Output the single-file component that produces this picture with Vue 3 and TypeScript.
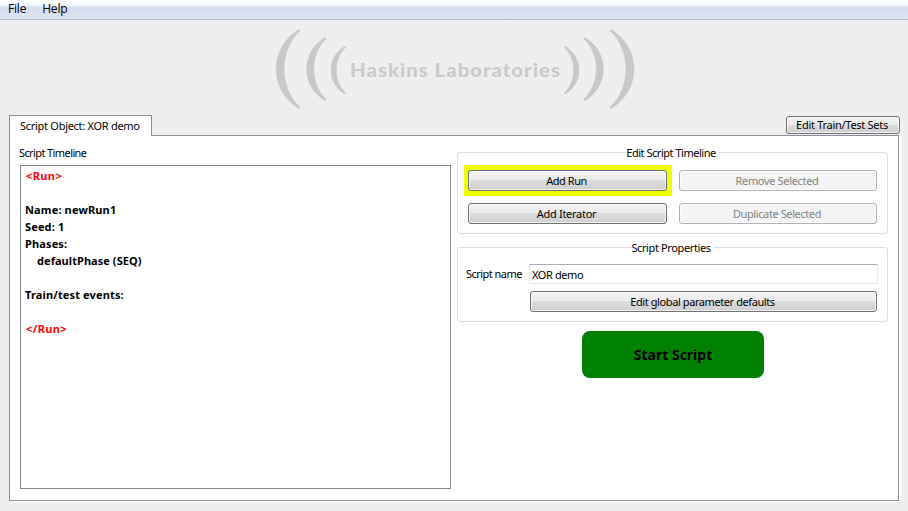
<script setup lang="ts">
import { ref } from 'vue'

interface ScriptLine {
  text: string
  tag?: boolean
  indent?: boolean
}

const menus = ['File', 'Help']
const scriptName = ref('XOR demo')
const lines: ScriptLine[] = [
  { text: '<Run>', tag: true },
  { text: '' },
  { text: 'Name: newRun1' },
  { text: 'Seed: 1' },
  { text: 'Phases:' },
  { text: 'defaultPhase (SEQ)', indent: true },
  { text: '' },
  { text: 'Train/test events:' },
  { text: '' },
  { text: '</Run>', tag: true },
]
</script>

<template>
  <div class="window">
    <nav class="menubar">
      <span v-for="m in menus" :key="m" class="menu">{{ m }}</span>
    </nav>

    <header class="banner">
      <svg class="waves" width="76" height="84" viewBox="272 27 76 84">
        <path d="M299 29.4C268.6 48 268.6 90 299 108.6L300 107.4C278.6 88 278.6 50 300 30.6Z" />
        <path d="M325.2 37.6C300.6 52 300.6 86 325.2 100.6L326.1 99.4C309.4 84 309.4 54 326.1 38.8Z" />
        <path d="M344.7 46.4C326.6 57 326.6 83 344.7 93.8L345.5 92.8C333 81 333 59 345.5 47.4Z" />
      </svg>
      <span class="brand"><span class="brand-text">Haskins Laboratories</span></span>
      <svg class="waves flip" width="76" height="84" viewBox="272 27 76 84">
        <path d="M299 29.4C268.6 48 268.6 90 299 108.6L300 107.4C278.6 88 278.6 50 300 30.6Z" />
        <path d="M325.2 37.6C300.6 52 300.6 86 325.2 100.6L326.1 99.4C309.4 84 309.4 54 326.1 38.8Z" />
        <path d="M344.7 46.4C326.6 57 326.6 83 344.7 93.8L345.5 92.8C333 81 333 59 345.5 47.4Z" />
      </svg>
    </header>

    <div class="tabbar">
      <div class="tab"><span class="t-tab">Script Object: XOR demo</span></div>
      <button class="btn corner"><span class="t-sets">Edit Train/Test Sets</span></button>
    </div>

    <main class="pane">
      <section class="timeline">
        <div class="caption"><span class="t-cap">Script Timeline</span></div>
        <div class="listing">
          <div
            v-for="(line, i) in lines"
            :key="i"
            class="line"
            :class="{ tag: line.tag, indent: line.indent }"
          >{{ line.text }}</div>
        </div>
      </section>

      <section class="side">
        <div class="group edit">
          <div class="legend"><i></i><span class="t-est">Edit Script Timeline</span><i></i></div>
          <div class="grid">
            <div class="highlight"><button class="btn"><span class="t-run">Add Run</span></button></div>
            <button class="btn" disabled><span class="t-rem">Remove Selected</span></button>
            <div class="cell"><button class="btn"><span class="t-iter">Add Iterator</span></button></div>
            <button class="btn" disabled><span class="t-dup">Duplicate Selected</span></button>
          </div>
        </div>

        <div class="group props">
          <div class="legend"><i></i><span class="t-prop">Script Properties</span><i></i></div>
          <div class="form">
            <label class="t-name" for="script-name">Script name</label>
            <input id="script-name" v-model="scriptName" type="text" />
            <button class="btn global"><span class="t-glob">Edit global parameter defaults</span></button>
          </div>
        </div>

        <button class="start">Start Script</button>
      </section>
    </main>
  </div>
</template>

<style>
body {
  margin: 0;
  background: #efefef;
}
</style>

<style scoped>
* {
  box-sizing: border-box;
}
.window {
  width: 908px;
  height: 511px;
  overflow: hidden;
  background: #efefef;
  color: #000;
  font: 11px/14px "Noto Sans", "Open Sans", sans-serif;
  white-space: nowrap;
  display: flex;
  flex-direction: column;
}
button,
input {
  font: inherit;
  margin: 0;
}
.menubar {
  height: 20px;
  flex: none;
  display: flex;
  gap: 16px;
  padding-left: 8px;
  background: linear-gradient(#ffffff 0, #eef1f8 6px, #d4dbed 7px, #e0e5f4 19px);
  border-bottom: 1px solid #b3b9cf;
  font: 12px/18px "Open Sans", sans-serif;
  letter-spacing: -0.2px;
}
.banner {
  height: 95px;
  flex: none;
  display: flex;
  padding: 7px 0 0 272px;
}
.waves {
  fill: #c8c8c8;
  stroke: #c8c8c8;
  stroke-width: 0.8;
  stroke-linejoin: round;
  flex: none;
}
.flip {
  transform: scaleX(-1);
}
.brand {
  width: 214px;
  padding: 29px 0 0 2px;
  color: #cacaca;
  font: 900 18.5px/28px Lato, sans-serif;
  letter-spacing: 0.9px;
}
.brand-text {
  display: inline-block;
  transform: scaleX(1.1);
  transform-origin: 0 50%;
}
.tabbar {
  height: 21px;
  flex: none;
  display: flex;
  justify-content: space-between;
  padding: 0 8px 0 9px;
}
.tab {
  width: 143px;
  height: 21px;
  margin-bottom: -1px;
  padding: 3px 0 0 10px;
  background: #fff;
  border: 1px solid #8b8c97;
  border-bottom: 0;
  position: relative;
  z-index: 1;
}
.btn {
  display: flex;
  align-items: center;
  justify-content: center;
  width: 100%;
  height: 21px;
  padding: 1px 2px 0 0;
  color: #000;
  border: 1px solid #707070;
  border-radius: 3px;
  background: linear-gradient(#f2f2f2 0, #ebebeb 48%, #dddddd 50%, #cfcfcf 100%);
  box-shadow: inset 0 0 0 1px #fafafad0;
}
.btn:disabled {
  color: #838383;
  border-color: #adb2b5;
  background: #f4f4f4;
  box-shadow: inset 0 0 0 1px #fcfcfc;
}
.corner {
  width: 114px;
  height: 18px;
  margin-top: 1px;
  padding: 0 2px 0 0;
}
.pane {
  width: 890px;
  height: 366px;
  flex: none;
  margin: -1px 0 0 9px;
  padding: 10px;
  display: flex;
  background: #fff;
  border: 1px solid #8b8c97;
  box-shadow: 2px 1px 0 #fff;
}
.timeline {
  width: 431px;
}
.caption {
  height: 19px;
  margin-left: -1px;
}
.listing {
  height: 324px;
  padding: 1px 4px;
  border: 1px solid #828790;
}
.line {
  height: 17px;
  font-weight: 700;
  line-height: 17px;
  letter-spacing: 0.14px;
}
.line.tag {
  color: #f00;
  padding-left: 1px;
  letter-spacing: 0.4px;
}
.line.indent {
  padding-left: 12px;
  letter-spacing: 0.06px;
}
.side {
  width: 431px;
  margin-left: 6px;
  display: flex;
  flex-direction: column;
}
.group {
  border: 1px solid #d5dfe5;
  border-top: 0;
  border-radius: 4px;
}
.legend {
  height: 14px;
  margin: -7px -1px 0;
  display: flex;
  align-items: center;
}
.legend span {
  padding: 2px 3px 0 0;
}
.legend i {
  flex: 1;
  height: 4px;
  margin-top: 4px;
  border-top: 1px solid #d5dfe5;
}
.legend i:first-child {
  border-top-left-radius: 4px;
}
.legend i:last-child {
  border-top-right-radius: 4px;
}
.edit {
  height: 82px;
  margin-top: 6px;
}
.props {
  height: 75px;
  margin-top: 13px;
}
.grid {
  display: grid;
  grid-template-columns: 208px 198px;
  grid-template-rows: 31px 31px;
  column-gap: 7px;
  row-gap: 2px;
  padding: 6px 0 0 6px;
  align-items: center;
}
.highlight {
  height: 31px;
  padding: 5px 5px 5px 4px;
  background: #f0ff00;
}
.cell {
  padding: 0 5px 0 4px;
}
.form {
  display: grid;
  grid-template-columns: 63px 349px;
  grid-template-rows: 20px 21px;
  row-gap: 7px;
  padding: 10px 0 0 8px;
}
.form label {
  line-height: 20px;
}
.form input {
  width: 349px;
  height: 20px;
  padding: 1px 2px 0;
  border: 1px solid #e3e9ef;
  border-top-color: #abadb3;
  border-radius: 1px;
  background: #fff;
  color: #000;
  outline: 0;
  letter-spacing: -0.4px;
}
.global {
  grid-column: 2;
  width: 347px;
  margin-left: 1px;
}
.start {
  width: 182px;
  height: 47px;
  margin: 9px 0 0 125px;
  padding: 0;
  border: 0;
  border-radius: 8px;
  background: #008000;
  color: #000;
  font: 700 14px/18px "Noto Sans", sans-serif;
}

/* Per-label tracking for the compact dialog font */
.t-tab { letter-spacing: -0.28px; }
.t-cap { letter-spacing: -0.6px; }
.t-est { letter-spacing: -0.48px; }
.t-sets { letter-spacing: -0.28px; }
.t-run { letter-spacing: -0.45px; }
.t-rem { letter-spacing: -0.33px; }
.t-iter { letter-spacing: -0.27px; }
.t-dup { letter-spacing: -0.4px; }
.t-prop { letter-spacing: -0.38px; }
.t-name { letter-spacing: -0.53px; }
.t-glob { letter-spacing: -0.41px; }
</style>
